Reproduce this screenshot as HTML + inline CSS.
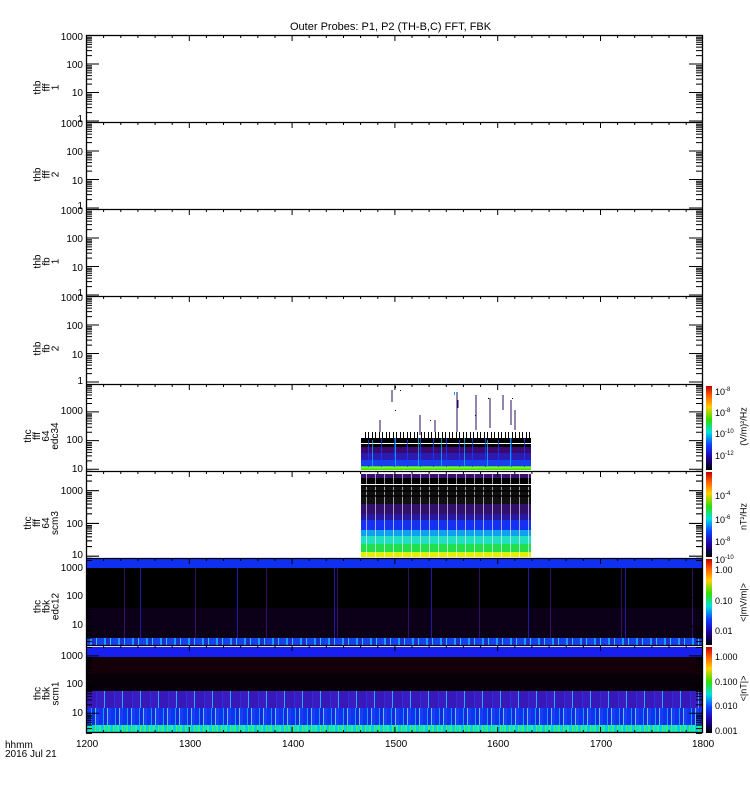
<!DOCTYPE html>
<html><head><meta charset="utf-8"><style>
body{margin:0;background:#fff;width:750px;height:800px;overflow:hidden;position:relative;font-family:"Liberation Sans",sans-serif;}
.t{position:absolute;font-size:10px;color:#000;line-height:10px;white-space:nowrap}
.c{position:absolute;font-size:9px;color:#000;line-height:9px;white-space:nowrap;left:715px}
.c sup{font-size:6px}
.yl{position:absolute;font-size:10px;line-height:10px;text-align:right;width:40px;left:43px}
.lab{position:absolute;font-size:10px;line-height:9px;transform:rotate(-90deg);transform-origin:center;text-align:center;width:60px}
.u{position:absolute;font-size:9px;line-height:9px;transform:rotate(-90deg);transform-origin:center;text-align:center;width:60px;left:714px}
.r{position:absolute}
</style></head><body>
<div class="t" style="left:290px;top:22px;font-size:11px">Outer Probes: P1, P2 (TH-B,C) FFT, FBK</div>

<!-- panel 5 data -->
<div class="r" style="left:361px;top:438px;width:170px;height:30px;background:
repeating-linear-gradient(90deg,transparent 0 7px,rgba(20,60,255,.8) 7px 8px,transparent 8px 13px),
repeating-linear-gradient(90deg,transparent 0 11px,rgba(0,200,255,.7) 11px 12px,transparent 12px 23px),
linear-gradient(#000 0 5px,#fff 5px 6px,#000 6px 9px,#3a0870 9px 15px,#2a1cb0 15px 22px,#1840f0 22px 28px,#20e060 28px 30px)"></div>
<div class="r" style="left:365px;top:432px;width:166px;height:8px;background:repeating-linear-gradient(90deg,#000 0 1px,transparent 1px 3px,#000 3px 4px,transparent 4px 7px)"></div>
<div class="r" style="left:361px;top:467px;width:170px;height:3px;background:linear-gradient(#b0f020,#30e000)"></div>
<svg class="r" style="left:0;top:0" width="750" height="800">
<g stroke="#2a0860" stroke-width="1">
<path d="M392 390v12M457 392v40M476 395v35M490 398v30M511 400v25M503 395v15M458 400v8M420 415v20M435 420v12M380 420v12M515 410v20"/>
</g>
<g fill="#000"><rect x="395" y="386" width="1" height="2"/><rect x="400" y="390" width="1" height="1"/><rect x="488" y="398" width="1" height="1"/><rect x="512" y="398" width="1" height="1"/><rect x="430" y="420" width="1" height="1"/><rect x="475" y="415" width="1" height="1"/><rect x="395" y="410" width="1" height="1"/></g>
<rect x="454" y="392" width="1" height="3" fill="#00a0ff"/>
</svg>
<!-- panel 6 data -->
<div class="r" style="left:361px;top:474px;width:170px;height:83px;background:
repeating-linear-gradient(90deg,transparent 0 5px,rgba(255,255,255,.6) 5px 6px,transparent 6px 9px),
linear-gradient(#3a1070 0 4px,#000 4px 10px,#fff 10px 11px,#101010 11px 30px,#30106a 30px 40px,#2818a0 40px 46px,#1430f0 46px 56px,#10a0f0 56px 62px,#20e0c0 62px 70px,#20e050 70px 78px,#e0f000 78px 83px)"></div>
<div class="r" style="left:361px;top:484px;width:170px;height:16px;background:repeating-linear-gradient(0deg,transparent 0 3px,rgba(0,0,0,.8) 3px 5px)"></div>
<!-- panel 7 -->
<div class="r" style="left:87px;top:559px;width:615px;height:9px;background:#1030f0"></div>
<div class="r" style="left:87px;top:568px;width:615px;height:70px;background:
repeating-linear-gradient(90deg,transparent 0 37px,rgba(70,20,140,.7) 37px 38px,transparent 38px 71px),
repeating-linear-gradient(90deg,transparent 0 53px,rgba(40,30,200,.8) 53px 54px,transparent 54px 97px),
linear-gradient(#000 0 40px,#0c0018 40px 70px)"></div>
<div class="r" style="left:87px;top:638px;width:615px;height:8px;background:
repeating-linear-gradient(90deg,#1c40f0 0 3px,#10a0ff 3px 5px,#2030d0 5px 9px,#30c0ff 9px 10px,#1440f0 10px 14px)"></div>
<!-- panel 8 -->
<div class="r" style="left:87px;top:647px;width:615px;height:10px;background:#1820f0"></div>
<div class="r" style="left:87px;top:657px;width:615px;height:34px;background:linear-gradient(#15000a 0 17px,#080008 17px 34px)"></div>
<div class="r" style="left:87px;top:691px;width:615px;height:17px;background:repeating-linear-gradient(90deg,#3818b8 0 9px,#2a30e0 9px 10px,#3a1cc0 10px 17px,#20b0ff 17px 18px)"></div>
<div class="r" style="left:87px;top:708px;width:615px;height:17px;background:repeating-linear-gradient(90deg,#1430f0 0 4px,#10a0ff 4px 5px,#1828e0 5px 8px,#60c0ff 8px 9px,#1440f0 9px 12px)"></div>
<div class="r" style="left:87px;top:725px;width:615px;height:8px;background:repeating-linear-gradient(90deg,#10e0d0 0 3px,#30f080 3px 5px,#00d0f0 5px 8px,#60f020 8px 9px)"></div>

<!-- colorbars -->
<div class="r" style="left:706px;top:386px;width:6px;height:84px;background:linear-gradient(#c00000,#ff6000 12%,#ffd000 25%,#30e000 40%,#00e0e0 55%,#1040ff 70%,#2000a0 85%,#000)"></div>
<div class="r" style="left:706px;top:472px;width:6px;height:85px;background:linear-gradient(#c00000,#ff6000 12%,#ffd000 25%,#30e000 40%,#00e0e0 55%,#1040ff 70%,#2000a0 85%,#000)"></div>
<div class="r" style="left:706px;top:559px;width:6px;height:86px;background:linear-gradient(#c00000,#ff6000 12%,#ffd000 25%,#30e000 40%,#00e0e0 55%,#1040ff 70%,#2000a0 85%,#000)"></div>
<div class="r" style="left:706px;top:647px;width:6px;height:86px;background:linear-gradient(#c00000,#ff6000 12%,#ffd000 25%,#30e000 40%,#00e0e0 55%,#1040ff 70%,#2000a0 85%,#000)"></div>

<svg class="r" style="left:0;top:0" width="750" height="800">
<defs>
<g id="dec"><path d="M0 0h13M0 -8.4h6M0 -13.4h6M0 -16.9h6M0 -19.6h6M0 -21.8h6M0 -23.7h6M0 -25.3h6M0 -26.7h6" stroke="#000" fill="none"/></g>
<g id="decr"><path d="M0 0h-13M0 -8.4h-6M0 -13.4h-6M0 -16.9h-6M0 -19.6h-6M0 -21.8h-6M0 -23.7h-6M0 -25.3h-6M0 -26.7h-6" stroke="#000" fill="none"/></g>
<g id="xt"><path d="M0 0v3M17.1 0v3M34.3 0v3M51.4 0v3M68.6 0v3M85.7 0v3M102.8 0v6M119.9 0v3M137 0v3M154.2 0v3M171.3 0v3M188.5 0v3M205.6 0v6M222.7 0v3M239.8 0v3M257 0v3M274.1 0v3M291.3 0v3M308.4 0v6M325.5 0v3M342.6 0v3M359.8 0v3M376.9 0v3M394.1 0v3M411.2 0v6M428.3 0v3M445.4 0v3M462.6 0v3M479.7 0v3M496.9 0v3M514 0v6M531.1 0v3M548.2 0v3M565.4 0v3M582.5 0v3M599.7 0v3" stroke="#000" fill="none"/></g>
</defs>
<g id="ticks">
<svg x="86" y="35" width="617" height="87" overflow="hidden"><g transform="translate(0,86)"><use href="#dec"/><use href="#dec" y="-28.5"/><use href="#dec" y="-57"/><use href="#dec" y="-85.5"/></g><g transform="translate(616,86)"><use href="#decr"/><use href="#decr" y="-28.5"/><use href="#decr" y="-57"/><use href="#decr" y="-85.5"/></g></svg>
<svg x="86" y="122" width="617" height="87" overflow="hidden"><g transform="translate(0,86)"><use href="#dec"/><use href="#dec" y="-28.5"/><use href="#dec" y="-57"/><use href="#dec" y="-85.5"/></g><g transform="translate(616,86)"><use href="#decr"/><use href="#decr" y="-28.5"/><use href="#decr" y="-57"/><use href="#decr" y="-85.5"/></g></svg>
<svg x="86" y="209" width="617" height="87" overflow="hidden"><g transform="translate(0,86)"><use href="#dec"/><use href="#dec" y="-28.5"/><use href="#dec" y="-57"/><use href="#dec" y="-85.5"/></g><g transform="translate(616,86)"><use href="#decr"/><use href="#decr" y="-28.5"/><use href="#decr" y="-57"/><use href="#decr" y="-85.5"/></g></svg>
<svg x="86" y="296" width="617" height="88" overflow="hidden"><g transform="translate(0,86)"><use href="#dec"/><use href="#dec" y="-28.5"/><use href="#dec" y="-57"/><use href="#dec" y="-85.5"/></g><g transform="translate(616,86)"><use href="#decr"/><use href="#decr" y="-28.5"/><use href="#decr" y="-57"/><use href="#decr" y="-85.5"/></g></svg>
<svg x="86" y="384" width="617" height="87" overflow="hidden"><g transform="translate(0,114)"><use href="#dec"/><use href="#dec" y="-28.7"/><use href="#dec" y="-57.4"/><use href="#dec" y="-86.1"/><use href="#dec" y="-114.8"/></g><g transform="translate(616,114)"><use href="#decr"/><use href="#decr" y="-28.7"/><use href="#decr" y="-57.4"/><use href="#decr" y="-86.1"/><use href="#decr" y="-114.8"/></g></svg>
<svg x="86" y="471" width="617" height="87" overflow="hidden"><g transform="translate(0,118) scale(1,1.15)"><use href="#dec"/><use href="#dec" y="-28.5"/><use href="#dec" y="-57"/><use href="#dec" y="-85.5"/><use href="#dec" y="-114"/></g><g transform="translate(616,118) scale(1,1.15)"><use href="#decr"/><use href="#decr" y="-28.5"/><use href="#decr" y="-57"/><use href="#decr" y="-85.5"/><use href="#decr" y="-114"/></g></svg>
<svg x="86" y="558" width="617" height="88" overflow="hidden"><g transform="translate(0,97)"><use href="#dec"/><use href="#dec" y="-28.7"/><use href="#dec" y="-57.4"/><use href="#dec" y="-86.1"/></g><g transform="translate(616,97)"><use href="#decr"/><use href="#decr" y="-28.7"/><use href="#decr" y="-57.4"/><use href="#decr" y="-86.1"/></g></svg>
<svg x="86" y="645" width="617" height="89" overflow="hidden"><g transform="translate(0,97)"><use href="#dec"/><use href="#dec" y="-28.7"/><use href="#dec" y="-57.4"/><use href="#dec" y="-86.1"/></g><g transform="translate(616,97)"><use href="#decr"/><use href="#decr" y="-28.7"/><use href="#decr" y="-57.4"/><use href="#decr" y="-86.1"/></g></svg>
</g>
<g transform="translate(86.5,0)">
<use href="#xt" y="35"/><use href="#xt" y="122"/><use href="#xt" y="209"/><use href="#xt" y="296"/><use href="#xt" y="384"/><use href="#xt" y="471"/><use href="#xt" y="558"/><use href="#xt" y="645"/>
<g transform="scale(1,-1)"><use href="#xt" y="-733"/></g>
</g>
<g stroke="#000" fill="none" stroke-width="1.3">
<rect x="86.5" y="35.5" width="616" height="697"/>
<path d="M86 122.5h617M86 209.5h617M86 296.5h617M86 384.5h617M86 471.5h617M86 558.5h617M86 645.5h617"/>
</g>
</svg>

<!-- y labels -->
<div class="yl" style="top:33px">1000</div><div class="yl" style="top:61px">100</div><div class="yl" style="top:89px">10</div>
<div class="yl" style="top:115px">1</div>
<div class="yl" style="top:120px">1000</div><div class="yl" style="top:148px">100</div><div class="yl" style="top:177px">10</div>
<div class="yl" style="top:202px">1</div>
<div class="yl" style="top:207px">1000</div><div class="yl" style="top:235px">100</div><div class="yl" style="top:264px">10</div>
<div class="yl" style="top:289px">1</div>
<div class="yl" style="top:294px">1000</div><div class="yl" style="top:322px">100</div><div class="yl" style="top:351px">10</div>
<div class="yl" style="top:377px">1</div>
<div class="yl" style="top:407px">1000</div><div class="yl" style="top:436px">100</div><div class="yl" style="top:465px">10</div>
<div class="yl" style="top:487px">1000</div><div class="yl" style="top:520px">100</div><div class="yl" style="top:551px">10</div>
<div class="yl" style="top:564px">1000</div><div class="yl" style="top:592px">100</div><div class="yl" style="top:621px">10</div>
<div class="yl" style="top:652px">1000</div><div class="yl" style="top:680px">100</div><div class="yl" style="top:709px">10</div>

<!-- panel labels -->
<div class="lab" style="left:17px;top:74px">thb<br>fff<br>1</div>
<div class="lab" style="left:17px;top:161px">thb<br>fff<br>2</div>
<div class="lab" style="left:17px;top:248px">thb<br>fb<br>1</div>
<div class="lab" style="left:17px;top:335px">thb<br>fb<br>2</div>
<div class="lab" style="left:12px;top:418px">thc<br>fff<br>64<br>edc34</div>
<div class="lab" style="left:12px;top:505px">thc<br>fff<br>64<br>scm3</div>
<div class="lab" style="left:17px;top:593px">thc<br>fbk<br>edc12</div>
<div class="lab" style="left:17px;top:680px">thc<br>fbk<br>scm1</div>

<!-- colorbar labels -->
<div class="c" style="top:386px">10<sup>-8</sup></div>
<div class="c" style="top:407px">10<sup>-8</sup></div>
<div class="c" style="top:428px">10<sup>-10</sup></div>
<div class="c" style="top:450px">10<sup>-12</sup></div>
<div class="c" style="top:490px">10<sup>-4</sup></div>
<div class="c" style="top:514px">10<sup>-6</sup></div>
<div class="c" style="top:536px">10<sup>-8</sup></div>
<div class="c" style="top:554px">10<sup>-10</sup></div>
<div class="c" style="top:566px">1.00</div>
<div class="c" style="top:597px">0.10</div>
<div class="c" style="top:627px">0.01</div>
<div class="c" style="top:653px">1.000</div>
<div class="c" style="top:678px">0.100</div>
<div class="c" style="top:702px">0.010</div>
<div class="c" style="top:727px">0.001</div>
<div class="u" style="top:422px">(V/m)²/Hz</div>
<div class="u" style="top:512px">nT²/Hz</div>
<div class="u" style="top:598px">&lt;|mV/m|&gt;</div>
<div class="u" style="top:684px">&lt;|nT|&gt;</div>

<!-- x labels -->
<div class="t" style="left:76px;top:740px">1200</div>
<div class="t" style="left:179px;top:740px">1300</div>
<div class="t" style="left:282px;top:740px">1400</div>
<div class="t" style="left:385px;top:740px">1500</div>
<div class="t" style="left:487px;top:740px">1600</div>
<div class="t" style="left:590px;top:740px">1700</div>
<div class="t" style="left:692px;top:740px">1800</div>
<div class="t" style="left:5px;top:741px">hhmm</div>
<div class="t" style="left:5px;top:750px">2016 Jul 21</div>
</body></html>
